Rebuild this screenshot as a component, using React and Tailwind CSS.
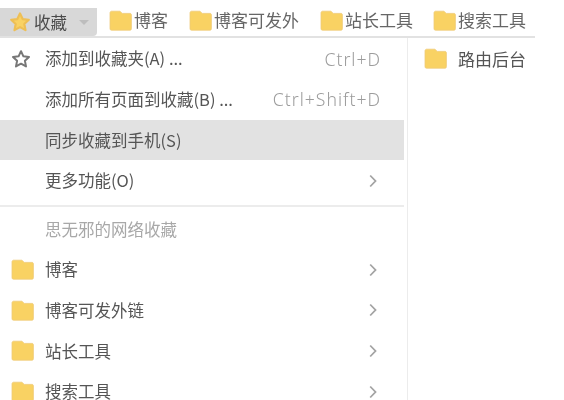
const Folder = ({ className = "w-[23px] h-[21px]" }) => (
  <svg viewBox="0 0 23 21" className={className}>
    <path d="M1 3C1 2 1.6 1.2 2.6 1.2H11L13.2 3.4H21C22 3.4 22.4 4 22.4 5V18.6C22.4 19.6 22 20.2 21 20.2H2.5C1.5 20.2 1 19.6 1 18.6Z" fill="#f9d263" stroke="#efca78" strokeWidth="0.8" />
  </svg>
)

const Chevron = () => (
  <svg viewBox="0 0 8 14" className="w-[8px] h-[14px]" fill="none" stroke="#a3a3a3" strokeWidth="1.8">
    <path d="M1.2 1.5 6.5 7 1.2 12.5" />
  </svg>
)

const Star = ({ fill, stroke, size }) => (
  <svg viewBox="0 0 24 24" width={size} height={size} fill={fill} stroke={stroke} strokeWidth="2.4" strokeLinejoin="round">
    <path d="M12 2.6 14.9 8.8 21.6 9.6 16.7 14.2 18 20.9 12 17.6 6 20.9 7.3 14.2 2.4 9.6 9.1 8.8Z" />
  </svg>
)

const bookmarks = [
  { name: "博客", width: "w-[80px]" },
  { name: "博客可发外", width: "w-[131px]" },
  { name: "站长工具", width: "w-[113px]" },
  { name: "搜索工具", width: "w-[101px]" },
]

const MenuRow = ({ icon, label, shortcut, arrow, active, muted }) => (
  <div className={`h-[40.6px] flex items-center ${active ? "bg-[#e2e2e2]" : ""}`}>
    <div className="w-[45px] shrink-0 flex items-center pl-[11px]">{icon}</div>
    <span className={`flex-1 whitespace-nowrap ${muted ? "text-[#a8a8a8]" : "text-[#555555]"}`}>{label}</span>
    {shortcut && (
      <span className="pr-[23px] text-[#9c9c9c] text-[17.6px] tracking-[1px] font-light font-['Noto_Sans',sans-serif]">{shortcut}</span>
    )}
    {arrow && (
      <span className="pr-[27px] flex items-center">
        <Chevron />
      </span>
    )}
  </div>
)

const App = () => {
  return (
    <div className="w-[564px] h-[400px] overflow-hidden bg-white text-[16.5px] blur-[0.4px] font-['Microsoft_YaHei','Noto_Sans_CJK_SC',sans-serif]">
      {/* bookmark bar */}
      <div className="h-[38px] w-[535px] flex items-end border-b-2 border-[#e2e2e2]">
        <div className="w-[97px] h-[28px] bg-[#d8d8d8] rounded-br-[4px] flex items-center pl-[9px]">
          <Star fill="#f9d263" stroke="#eebf55" size={22} />
          <span className="ml-[3px] text-[#4a4a4a]">收藏</span>
          <span className="ml-[12px] w-0 h-0 border-x-[5px] border-x-transparent border-t-[5px] border-t-[#bdbdbd]"></span>
        </div>
        <div className="flex h-full items-center pl-[12px] pt-[4px] text-[17px]">
          {bookmarks.map((b) => (
            <div key={b.name} className={`${b.width} flex items-center gap-[2px] text-[#666666] overflow-hidden`}>
              <Folder />
              <span className="whitespace-nowrap">{b.name}</span>
            </div>
          ))}
        </div>
      </div>

      <div className="flex h-[362px]">
        {/* main menu */}
        <div className="w-[404px] shrink-0 pt-[0.5px]">
          <MenuRow icon={<Star fill="none" stroke="#777777" size={20} />} label="添加到收藏夹(A) ..." shortcut="Ctrl+D" />
          <MenuRow label="添加所有页面到收藏(B) ..." shortcut="Ctrl+Shift+D" />
          <MenuRow label="同步收藏到手机(S)" active />
          <MenuRow label="更多功能(O)" arrow />
          <div className="h-[2px] mt-[4px] mb-[2px] bg-[#ececec]"></div>
          <MenuRow label="思无邪的网络收藏" muted />
          <MenuRow icon={<Folder />} label="博客" arrow />
          <MenuRow icon={<Folder />} label="博客可发外链" arrow />
          <MenuRow icon={<Folder />} label="站长工具" arrow />
          <MenuRow icon={<Folder />} label="搜索工具" arrow />
        </div>

        {/* sub menu */}
        <div className="flex-1 ml-[3px] border-l border-[#ececec] pt-[0.5px]">
          <div className="h-[40.6px] flex items-center pl-[16px] text-[17px]">
            <Folder />
            <span className="ml-[11px] text-[#555555]">路由后台</span>
          </div>
        </div>
      </div>
    </div>
  )
}

export default App
